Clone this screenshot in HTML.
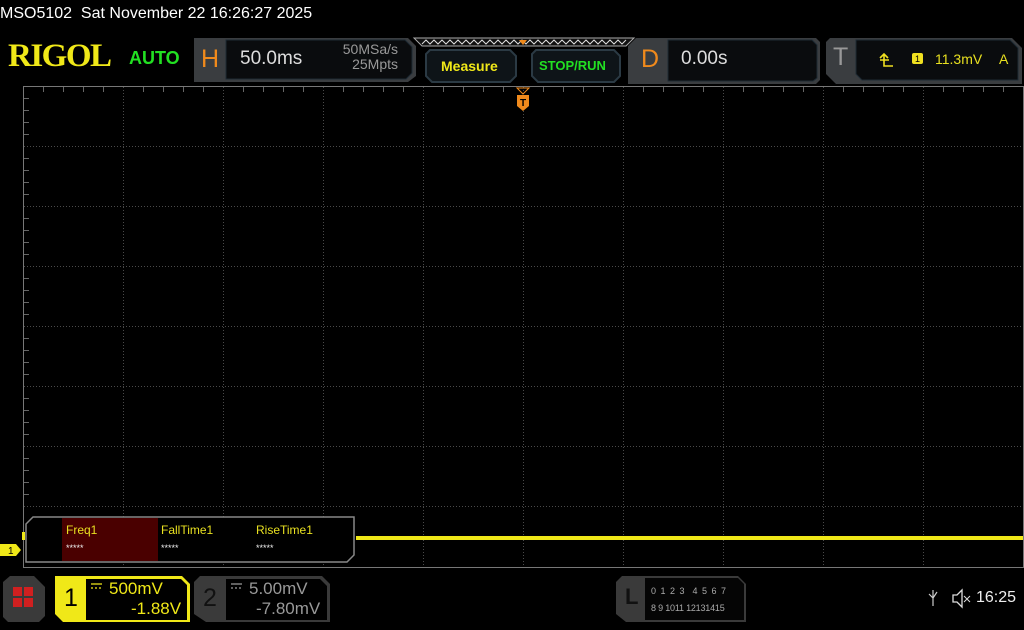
<!DOCTYPE html>
<html><head><meta charset="utf-8"><style>
body{margin:0;width:1024px;height:630px;background:#000;overflow:hidden;position:relative;font-family:"Liberation Sans",sans-serif}
.a{position:absolute;white-space:nowrap}
</style></head><body>
<div class="a" style="left:0;top:5px;color:#fff;font-size:16px">MSO5102&nbsp; Sat November 22 16:26:27 2025</div>
<div class="a" style="left:8px;top:38px;color:#f0e818;font-family:'Liberation Serif',serif;font-weight:bold;font-size:33px;letter-spacing:-1.5px;transform:scaleX(1.0);transform-origin:left">RIGOL</div>
<div class="a" style="left:129px;top:48px;color:#22e022;font-weight:bold;font-size:18px">AUTO</div>

<svg class="a" style="left:0;top:0" width="1024" height="630">
<path d="M194 38 H408 L416 46 V76 L408 82 H194 Z" fill="#3a3d40"/>
<path d="M226 40 H405 L412 47 V73 L406 79 H226 Z" fill="#0a0c0e" stroke="#1d2a33"/>
<path d="M414 38 H634 L626 46 H422 Z" fill="#111" stroke="#aaa" stroke-width="1"/>
<polyline points="422,44 426,40 430,44 434,40 438,44 442,40 446,44 450,40 454,44 458,40 462,44 466,40 470,44 474,40 478,44 482,40 486,44 490,40 494,44 498,40 502,44 506,40 510,44 514,40 518,44 522,40 526,44 530,40 534,44 538,40 542,44 546,40 550,44 554,40 558,44 562,40 566,44 570,40 574,44 578,40 582,44 586,40 590,44 594,40 598,44 602,40 606,44 610,40 614,44 618,40 622,44 626,40" fill="none" stroke="#ddd" stroke-width="1"/>
<path d="M519 40 H527 L523 45 Z" fill="#f08a1c"/>
<path d="M430 50 H510 L516 56 V76 L510 82 H432 L426 76 V54 Z" fill="#0e1418" stroke="#2b3a44" stroke-width="2"/>
<path d="M536 50 H614 L620 56 V76 L614 82 H538 L532 76 V54 Z" fill="#0e1418" stroke="#2b3a44" stroke-width="2"/>
<path d="M636 38 H816 L820 42 V80 L816 84 H628 V46 Z" fill="#3a3d40"/>
<path d="M668 40 H812 L817 45 V78 L813 81 H668 Z" fill="#0a0c0e" stroke="#1d2a33"/>
<path d="M830 38 H1012 L1022 48 V84 H836 L826 74 V42 Z" fill="#3a3d40"/>
<path d="M856 40 H1010 L1018 48 V80 H862 L856 74 Z" fill="#0a0c0e" stroke="#1d2a33"/>
<path d="M880 60 H889 M884 54 V66 H893 M880 58 L884 54 L888 58" fill="none" stroke="#f0e020" stroke-width="1.6"/>
<rect x="912" y="53" width="11" height="11" rx="2" fill="#f0e020"/>
<text x="917.5" y="62" font-size="9" text-anchor="middle" fill="#000" font-family="Liberation Sans">1</text>

<g stroke="#4a4a4a" stroke-width="1" stroke-dasharray="1 2">
<line x1="123.5" y1="87" x2="123.5" y2="567"/><line x1="223.5" y1="87" x2="223.5" y2="567"/><line x1="323.5" y1="87" x2="323.5" y2="567"/><line x1="423.5" y1="87" x2="423.5" y2="567"/><line x1="523.5" y1="87" x2="523.5" y2="567"/><line x1="623.5" y1="87" x2="623.5" y2="567"/><line x1="723.5" y1="87" x2="723.5" y2="567"/><line x1="823.5" y1="87" x2="823.5" y2="567"/><line x1="923.5" y1="87" x2="923.5" y2="567"/>
<line x1="24" y1="146.5" x2="1023" y2="146.5"/><line x1="24" y1="206.5" x2="1023" y2="206.5"/><line x1="24" y1="266.5" x2="1023" y2="266.5"/><line x1="24" y1="326.5" x2="1023" y2="326.5"/><line x1="24" y1="386.5" x2="1023" y2="386.5"/><line x1="24" y1="446.5" x2="1023" y2="446.5"/><line x1="24" y1="506.5" x2="1023" y2="506.5"/>
</g>
<g stroke="#666" stroke-width="1">
<path d="M43.5 87v5M63.5 87v5M83.5 87v5M103.5 87v5M143.5 87v5M163.5 87v5M183.5 87v5M203.5 87v5M243.5 87v5M263.5 87v5M283.5 87v5M303.5 87v5M343.5 87v5M363.5 87v5M383.5 87v5M403.5 87v5M443.5 87v5M463.5 87v5M483.5 87v5M503.5 87v5M543.5 87v5M563.5 87v5M583.5 87v5M603.5 87v5M643.5 87v5M663.5 87v5M683.5 87v5M703.5 87v5M743.5 87v5M763.5 87v5M783.5 87v5M803.5 87v5M843.5 87v5M863.5 87v5M883.5 87v5M903.5 87v5M943.5 87v5M963.5 87v5M983.5 87v5M1003.5 87v5"/>
<path d="M24 98.5h5M24 110.5h5M24 122.5h5M24 134.5h5M24 158.5h5M24 170.5h5M24 182.5h5M24 194.5h5M24 218.5h5M24 230.5h5M24 242.5h5M24 254.5h5M24 278.5h5M24 290.5h5M24 302.5h5M24 314.5h5M24 338.5h5M24 350.5h5M24 362.5h5M24 374.5h5M24 398.5h5M24 410.5h5M24 422.5h5M24 434.5h5M24 458.5h5M24 470.5h5M24 482.5h5M24 494.5h5"/>
</g>
<rect x="23.5" y="86.5" width="1000" height="481" fill="none" stroke="#777"/>
<path d="M517 88 H529 L523 94 Z" fill="none" stroke="#f08a1c"/>
<path d="M517 95 H529 V106 L523 111 L517 106 Z" fill="#f08a1c"/>
<text x="523" y="106" font-size="10" text-anchor="middle" fill="#000" font-weight="bold" font-family="Liberation Sans">T</text>
<rect x="356" y="536" width="667" height="4" fill="#f0e818"/>
<rect x="22" y="532" width="3" height="8" fill="#f0e818"/>
<path d="M0 544 H16 L21 550 L16 556 H0 Z" fill="#f0e818"/>
<text x="8" y="554" font-size="10" fill="#000" font-family="Liberation Sans">1</text>
<path d="M33 517 H354 V555 L347 562 H26 V524 Z" fill="#000" stroke="#888" stroke-width="1.5"/>
<rect x="62" y="518" width="96" height="43" fill="#4a0000"/>
<path d="M10 576 H34 L45 587 V616 L39 622 H8 L3 617 V582 Z" fill="#3a3a3a"/>
<rect x="13" y="587" width="9" height="9" fill="#d02020"/><rect x="24" y="587" width="9" height="9" fill="#d02020"/><rect x="13" y="598" width="9" height="9" fill="#d02020"/><rect x="24" y="598" width="9" height="9" fill="#d02020"/>
<path d="M55 576 H182 L190 584 V622 H63 L55 614 Z" fill="#f0e818"/>
<path d="M86 579 H181 L187 585 V620 H86 Z" fill="#000"/>
<path d="M200 576 H322 L330 584 V622 H206 L194 614 V582 Z" fill="#3a3a3a"/>
<path d="M226 579 H320 L327 586 V620 H226 Z" fill="#000"/>
<path d="M91 584 H102 M91 588 h2 m2 0 h2 m2 0 h2" stroke="#f0e818" stroke-width="1.3"/>
<path d="M231 584 H242 M231 588 h2 m2 0 h2 m2 0 h2" stroke="#999" stroke-width="1.3"/>
<path d="M622 576 H738 L746 584 V622 H626 L616 614 V582 Z" fill="#3a3a3a"/>
<path d="M645 578 H738 L744 584 V620 H645 Z" fill="#050505"/>
<path d="M933 590 V606 M929 594 L933 598 L937 592" fill="none" stroke="#ccc" stroke-width="1.2"/>
<path d="M953 595 H957 L962 590 V607 L957 602 H953 Z" fill="none" stroke="#ddd" stroke-width="1.3"/>
<path d="M964 596 L970 602 M970 596 L964 602" stroke="#ddd"/>
</svg>

<div class="a" style="left:201px;top:45px;color:#f08a1c;font-size:25px">H</div>
<div class="a" style="left:240px;top:48px;color:#ddd;font-size:19px">50.0ms</div>
<div class="a" style="left:330px;top:42px;width:68px;color:#999;font-size:14px;line-height:15px;text-align:right">50MSa/s<br>25Mpts</div>
<div class="a" style="left:441px;top:58px;color:#f0e818;font-weight:bold;font-size:14px">Measure</div>
<div class="a" style="left:539px;top:58px;color:#22e022;font-weight:bold;font-size:13px">STOP/RUN</div>
<div class="a" style="left:641px;top:45px;color:#f08a1c;font-size:25px">D</div>
<div class="a" style="left:681px;top:48px;color:#ddd;font-size:19px">0.00s</div>
<div class="a" style="left:833px;top:43px;color:#999;font-size:25px">T</div>
<div class="a" style="left:935px;top:51px;color:#e8e020;font-size:14px">11.3mV</div>
<div class="a" style="left:999px;top:51px;color:#e8e020;font-size:14px">A</div>

<div class="a" style="left:66px;top:523px;color:#e8e020;font-size:12px">Freq1</div>
<div class="a" style="left:161px;top:523px;color:#e8e020;font-size:12px">FallTime1</div>
<div class="a" style="left:256px;top:523px;color:#e8e020;font-size:12px">RiseTime1</div>
<div class="a" style="left:66px;top:543px;color:#eee;font-size:9px">*****</div>
<div class="a" style="left:161px;top:543px;color:#eee;font-size:9px">*****</div>
<div class="a" style="left:256px;top:543px;color:#eee;font-size:9px">*****</div>

<div class="a" style="left:64px;top:584px;color:#000;font-size:25px">1</div>
<div class="a" style="left:109px;top:579px;color:#f0e818;font-size:17px">500mV</div>
<div class="a" style="left:131px;top:599px;color:#f0e818;font-size:17px">-1.88V</div>
<div class="a" style="left:203px;top:584px;color:#111;font-size:25px">2</div>
<div class="a" style="left:249px;top:579px;color:#999;font-size:17px">5.00mV</div>
<div class="a" style="left:256px;top:599px;color:#999;font-size:17px">-7.80mV</div>
<div class="a" style="left:625px;top:584px;color:#111;font-size:22px;font-weight:bold">L</div>
<div class="a" style="left:651px;top:586px;color:#aaa;font-size:9px;letter-spacing:1px">0 1 2 3&nbsp; 4 5 6 7</div>
<div class="a" style="left:651px;top:603px;color:#aaa;font-size:9px;letter-spacing:-0.2px">8 9 1011 12131415</div>
<div class="a" style="left:976px;top:589px;color:#eee;font-size:16px">16:25</div>
</body></html>
